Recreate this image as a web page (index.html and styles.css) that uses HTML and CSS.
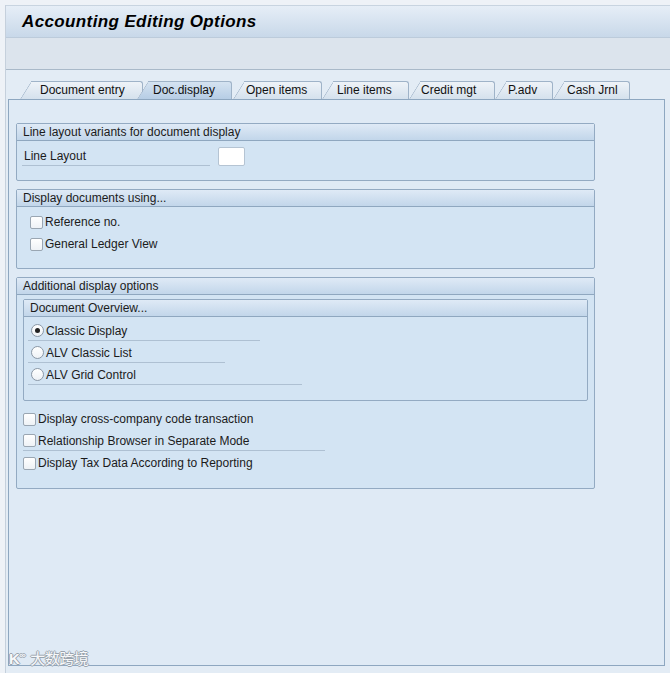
FILE: index.html
```html
<!DOCTYPE html>
<html>
<head>
<meta charset="utf-8">
<link rel="stylesheet" href="styles.css">
</head>
<body>
<div class="app">
  <div class="titlebar"><h1 class="title">Accounting Editing Options</h1></div>
  <div class="toolbar"></div>
  <div class="main">
    <div class="tabs">
      <div class="tab t1"><span>Document entry</span></div>
      <div class="tab t2 active"><span>Doc.display</span></div>
      <div class="tab t3"><span>Open items</span></div>
      <div class="tab t4"><span>Line items</span></div>
      <div class="tab t5"><span>Credit mgt</span></div>
      <div class="tab t6"><span>P.adv</span></div>
      <div class="tab t7"><span>Cash Jrnl</span></div>
    </div>
    <div class="panel">
      <div class="group">
        <div class="ghead">Line layout variants for document display</div>
        <div class="gbody">
          <div class="row">
            <span class="label ul" style="width:188px">Line Layout</span>
            <span class="input"></span>
          </div>
        </div>
      </div>

      <div class="group">
        <div class="ghead">Display documents using...</div>
        <div class="gbody indent">
          <div class="row"><span class="cb"></span><span class="text">Reference no.</span></div>
          <div class="row"><span class="cb"></span><span class="text">General Ledger View</span></div>
        </div>
      </div>

      <div class="group">
        <div class="ghead">Additional display options</div>
        <div class="gbody tight">
          <div class="group inner">
            <div class="ghead">Document Overview...</div>
            <div class="gbody radios">
              <div class="row"><span class="ul line" style="width:232px"><span class="rb on"></span><span class="text">Classic Display</span></span></div>
              <div class="row"><span class="ul line" style="width:197px"><span class="rb"></span><span class="text">ALV Classic List</span></span></div>
              <div class="row"><span class="ul line" style="width:274px"><span class="rb"></span><span class="text">ALV Grid Control</span></span></div>
            </div>
          </div>
          <div class="checks">
            <div class="row"><span class="cb"></span><span class="text">Display cross-company code transaction</span></div>
            <div class="row"><span class="ul line" style="width:302px"><span class="cb"></span><span class="text">Relationship Browser in Separate Mode</span></span></div>
            <div class="row"><span class="cb"></span><span class="text">Display Tax Data According to Reporting</span></div>
          </div>
        </div>
      </div>
    </div>
  </div>
  <div class="watermark"><span class="wm-logo">K<sup>∞</sup></span>大数跨境</div>
</div>
</body>
</html>
```

FILE: styles.css
```css
* { box-sizing: border-box; }
html, body { margin: 0; padding: 0; }
body {
  background: #eef2f7;
  font-family: "Liberation Sans", Arial, sans-serif;
  font-size: 12px;
  color: #1b1b1b;
  width: 670px;
  height: 673px;
  overflow: hidden;
}
.app {
  position: relative;
  margin: 5px 0 0 5px;
  height: 668px;
  border-left: 1px solid #c5d0dc;
  background: #e3ecf5;
}
.titlebar {
  height: 32px;
  border-top: 1px solid #c8d4e0;
  background: linear-gradient(#e6eef7, #c8d8e9);
  padding-left: 16px;
  display: flex;
  align-items: center;
}
.title {
  margin: 0;
  font-size: 17px;
  font-weight: bold;
  font-style: italic;
  color: #000;
  letter-spacing: 0.38px;
}
.toolbar {
  height: 33px;
  background: #dce4ed;
  border-top: 1px solid #bccbdb;
  border-bottom: 1px solid #a9b9c9;
}
.main {
  padding: 11px 5px 0 2px;
}
.tabs {
  display: flex;
  padding-left: 12px;
  height: 18px;
  position: relative;
  z-index: 1;
}
.tab {
  position: relative;
  height: 18px;
  line-height: 18px;
  color: #111;
  z-index: 1;
}
.tab span {
  position: relative;
  z-index: 2;
}
.tab::after {
  content: "";
  position: absolute;
  left: 11px;
  right: 0;
  top: 0;
  bottom: 0;
  background: linear-gradient(#eef3f8, #d5e1ed);
  border-top: 1px solid #9fb3c8;
  border-right: 1px solid #9fb3c8;
  border-top-right-radius: 3px;
  z-index: 1;
}
.tab::before {
  content: "";
  position: absolute;
  left: 0;
  top: 0;
  bottom: 0;
  width: 22px;
  transform: skewX(-32deg);
  transform-origin: bottom left;
  background: linear-gradient(#eef3f8, #d5e1ed);
  border-top: 1px solid #9fb3c8;
  border-left: 1px solid #9fb3c8;
  border-top-left-radius: 2px;
  z-index: 1;
}
.tab.active::after, .tab.active::before {
  background: linear-gradient(#d5e3f1, #b6cde5);
}
.tab.active { z-index: 3; }
.t1 { width: 123px; padding-left: 20px; }
.t2 { width: 95px; padding-left: 16px; margin-left: -6px; }
.t3 { width: 89px; padding-left: 13px; margin-left: 1px; }
.t4 { width: 87px; padding-left: 15px; }
.t5 { width: 86px; padding-left: 12px; }
.t6 { width: 58px; padding-left: 13px; }
.t7 { width: 77px; padding-left: 14px; }

.panel {
  position: relative;
  z-index: 0;
  height: 567px;
  width: 657px;
  border: 1px solid #8ea7c0;
  background: #dfeaf5;
  padding: 23px 0 0 7px;
  display: flex;
  flex-direction: column;
  align-items: flex-start;
  gap: 8px;
}
.group {
  width: 579px;
  border: 1px solid #93aac2;
  border-radius: 2px;
  background: #d3e4f3;
}
.ghead {
  height: 17px;
  line-height: 16px;
  padding-left: 6px;
  background: linear-gradient(#dfeaf6, #c2d6ea);
  border-bottom: 1px solid #8fa7bf;
}
.gbody {
  padding: 4px 0 13px 5px;
}
.gbody.indent { padding-left: 13px; }
.gbody.tight { padding: 4px 0 14px 6px; }
.group.inner {
  width: 565px;
}
.gbody.radios { padding: 3px 0 14px 4px; }
.checks { margin-top: 7px; }
.row {
  height: 22px;
  display: flex;
  align-items: center;
}
.label {
  display: inline-block;
  height: 19px;
  line-height: 19px;
  padding-left: 2px;
}
.ul {
  border-bottom: 1px solid #aec0d2;
}
.line {
  display: flex;
  align-items: center;
  align-self: flex-start;
  height: 20px;
  margin-top: 1px;
}
.input {
  display: inline-block;
  width: 27px;
  height: 19px;
  margin-left: 8px;
  background: #fff;
  border: 1px solid #b5c4d3;
  border-radius: 2px;
}
.cb {
  display: inline-block;
  width: 13px;
  height: 13px;
  margin-right: 2px;
  background: linear-gradient(#ffffff, #eef2f6);
  border: 1px solid #9aa6b2;
  border-radius: 2px;
  flex: none;
}
.rb {
  display: inline-block;
  position: relative;
  width: 13px;
  height: 13px;
  margin-left: 3px;
  margin-right: 2px;
  background: linear-gradient(#ffffff, #eef2f6);
  border: 1px solid #8b98a6;
  border-radius: 50%;
  flex: none;
}
.rb.on::after {
  content: "";
  position: absolute;
  left: 3px;
  top: 3px;
  width: 5px;
  height: 5px;
  border-radius: 50%;
  background: #222;
}
.text { white-space: nowrap; }
.watermark {
  position: absolute;
  left: 3px;
  top: 642px;
  font-family: "Noto Sans CJK SC", sans-serif;
  font-size: 15px;
  color: #f7f8fa;
  text-shadow: 1px 0 0 #9aa4ae, -1px 0 0 #9aa4ae, 0 1px 0 #9aa4ae, 0 -1px 0 #9aa4ae;
  letter-spacing: -0.5px;
}
.wm-logo {
  font-family: "Liberation Sans", sans-serif;
  font-weight: bold;
  margin-right: 5px;
}
.wm-logo sup { font-size: 9px; }
```
